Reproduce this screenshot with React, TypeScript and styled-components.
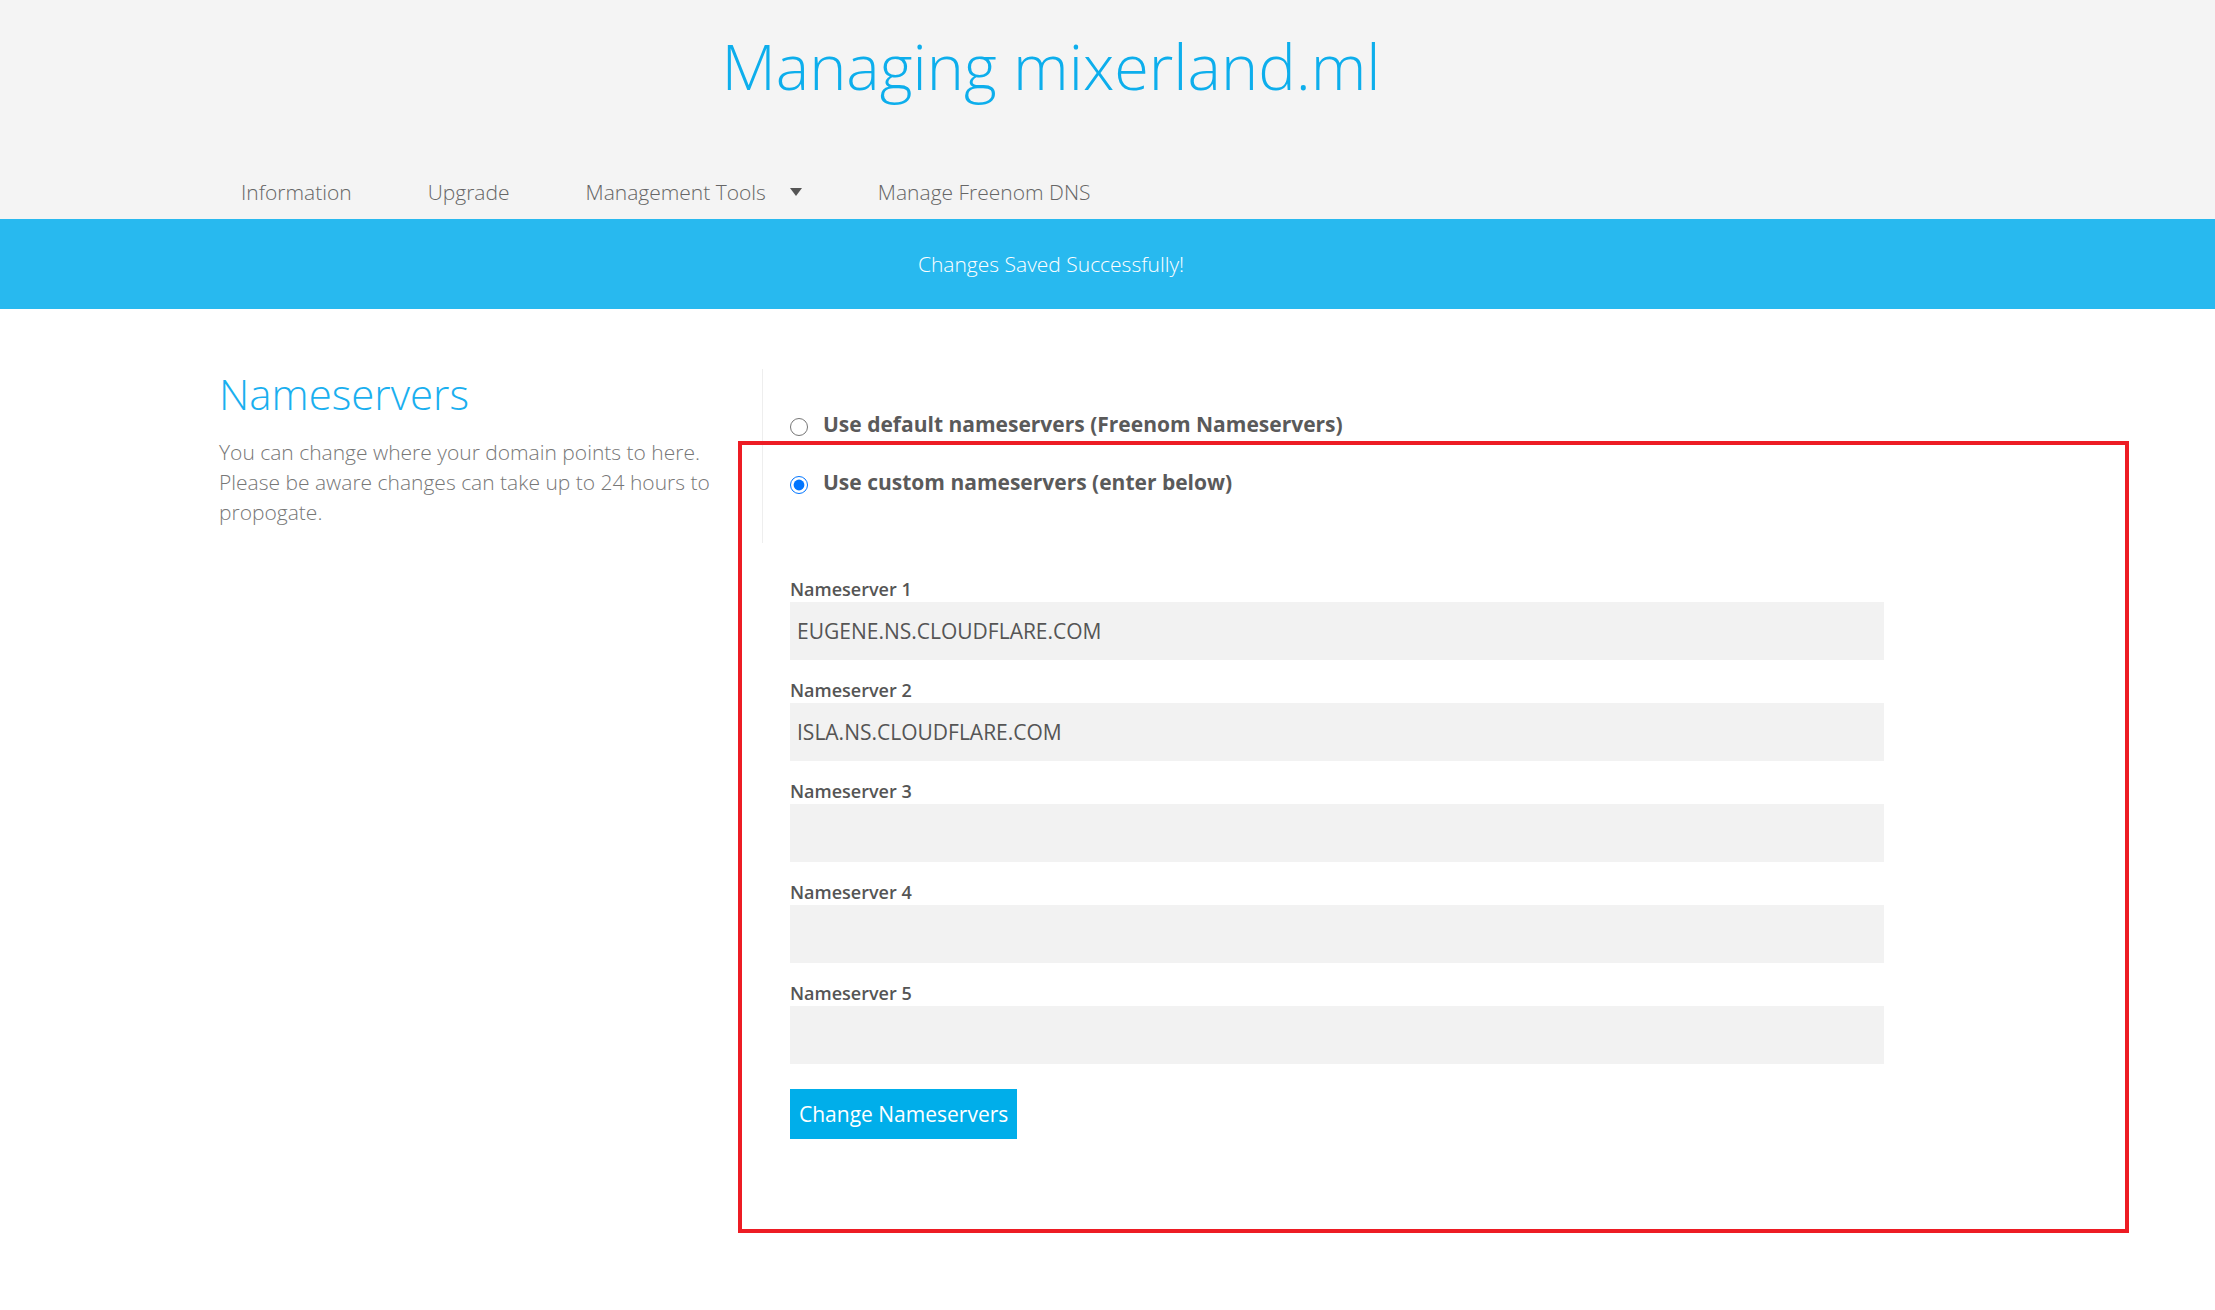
import React, { useState } from 'react';
import styled, { createGlobalStyle } from 'styled-components';

const GlobalStyle = createGlobalStyle`
  html, body {
    margin: 0;
    padding: 0;
    background: #FFFFFF;
    font-family: 'Open Sans', 'Noto Sans', sans-serif;
  }
  * {
    box-sizing: border-box;
  }
`;

const Page = styled.div`
  position: relative;
  min-height: 1310px;
  width: 2215px;
`;

const Header = styled.header`
  background-color: #F4F4F4;
  height: 219px;
  display: flex;
  flex-direction: column;
`;

const Title = styled.h1`
  margin: 0;
  padding-top: 28px;
  width: 2102px;
  text-align: center;
  font-size: 63px;
  line-height: 75px;
  font-weight: 300;
  color: #0DAEEC;
`;

const Nav = styled.nav`
  margin-top: auto;
  height: 54px;
  display: flex;
  align-items: center;
  gap: 76px;
  padding-left: 241px;
`;

const NavItem = styled.a`
  display: flex;
  align-items: center;
  gap: 24px;
  font-size: 21px;
  font-weight: 300;
  color: #666666;
  text-decoration: none;
  cursor: pointer;
`;

const Banner = styled.div`
  height: 90px;
  background-color: #28B9EF;
  display: flex;
  align-items: center;
  width: 100%;
`;

const BannerText = styled.span`
  width: 2102px;
  text-align: center;
  color: #FFFFFF;
  font-size: 21px;
  font-weight: 300;
`;

const Content = styled.main`
  display: flex;
  margin-left: 219px;
  width: 1665px;
  padding-top: 60px;
`;

const Sidebar = styled.section`
  width: 543px;
  flex-shrink: 0;
`;

const SectionTitle = styled.h2`
  margin: 0;
  font-size: 42px;
  line-height: 50px;
  font-weight: 300;
  color: #1AAFEF;
`;

const Description = styled.p`
  margin: 18px 0 0;
  width: 510px;
  font-size: 21px;
  line-height: 30px;
  font-weight: 300;
  color: #777777;
`;

const FormColumn = styled.section`
  flex: 1;
  display: flex;
  flex-direction: column;
`;

const RadioGroup = styled.div`
  border-left: 1px solid #EEEEEE;
  padding: 38px 0 44px 27px;
  display: flex;
  flex-direction: column;
  gap: 24px;
`;

const RadioRow = styled.label`
  display: flex;
  align-items: center;
  gap: 15px;
  height: 34px;
  font-size: 21px;
  font-weight: 700;
  color: #5A5A5A;
  cursor: pointer;
`;

const Radio = styled.input`
  margin: 6px 0 0 0;
  width: 18px;
  height: 18px;
  accent-color: #0075FF;
`;

const Fields = styled.div`
  padding: 34px 0 0 28px;
  display: flex;
  flex-direction: column;
  gap: 18px;
`;

const Field = styled.div`
  display: flex;
  flex-direction: column;
`;

const FieldLabel = styled.label`
  font-size: 18px;
  line-height: 25px;
  font-weight: 600;
  color: #555555;
`;

const TextInput = styled.input`
  width: 1094px;
  height: 58px;
  border: none;
  outline: none;
  background-color: #F2F2F2;
  padding: 0 7px;
  font-family: 'Open Sans', 'Noto Sans', sans-serif;
  font-size: 21px;
  font-weight: 400;
  color: #555555;
`;

const SubmitButton = styled.button`
  align-self: flex-start;
  margin-top: 7px;
  height: 50px;
  padding: 0 9px;
  border: none;
  background-color: #00AEEA;
  color: #FFFFFF;
  font-family: 'Open Sans', 'Noto Sans', sans-serif;
  font-size: 21px;
  font-weight: 400;
  cursor: pointer;
`;

const Highlight = styled.div`
  position: absolute;
  left: 738px;
  top: 441px;
  width: 1391px;
  height: 792px;
  border: 4px solid #ED1C24;
  pointer-events: none;
`;

const Caret = () => (
  <svg width="12" height="8" viewBox="0 0 12 8">
    <path d="M0 0 L12 0 L6 8 Z" fill="#555555" />
  </svg>
);

const navItems = ['Information', 'Upgrade', 'Management Tools', 'Manage Freenom DNS'];

const App: React.FC = () => {
  const [mode, setMode] = useState<'default' | 'custom'>('custom');
  const [servers, setServers] = useState<string[]>([
    'EUGENE.NS.CLOUDFLARE.COM',
    'ISLA.NS.CLOUDFLARE.COM',
    '',
    '',
    '',
  ]);

  const updateServer = (index: number, value: string) => {
    setServers(prev => prev.map((s, i) => (i === index ? value : s)));
  };

  return (
    <Page>
      <GlobalStyle />
      <Header>
        <Title>Managing mixerland.ml</Title>
        <Nav>
          {navItems.map(item => (
            <NavItem key={item}>
              {item}
              {item === 'Management Tools' && <Caret />}
            </NavItem>
          ))}
        </Nav>
      </Header>
      <Banner>
        <BannerText>Changes Saved Successfully!</BannerText>
      </Banner>
      <Content>
        <Sidebar>
          <SectionTitle>Nameservers</SectionTitle>
          <Description>
            You can change where your domain points to here. Please be aware changes can take up to 24 hours to propogate.
          </Description>
        </Sidebar>
        <FormColumn>
          <RadioGroup>
            <RadioRow>
              <Radio type="radio" name="ns" checked={mode === 'default'} onChange={() => setMode('default')} />
              Use default nameservers (Freenom Nameservers)
            </RadioRow>
            <RadioRow>
              <Radio type="radio" name="ns" checked={mode === 'custom'} onChange={() => setMode('custom')} />
              Use custom nameservers (enter below)
            </RadioRow>
          </RadioGroup>
          <Fields>
            {servers.map((value, i) => (
              <Field key={i}>
                <FieldLabel>Nameserver {i + 1}</FieldLabel>
                <TextInput value={value} onChange={e => updateServer(i, e.target.value)} />
              </Field>
            ))}
            <SubmitButton>Change Nameservers</SubmitButton>
          </Fields>
        </FormColumn>
      </Content>
      <Highlight />
    </Page>
  );
};

export default App;
